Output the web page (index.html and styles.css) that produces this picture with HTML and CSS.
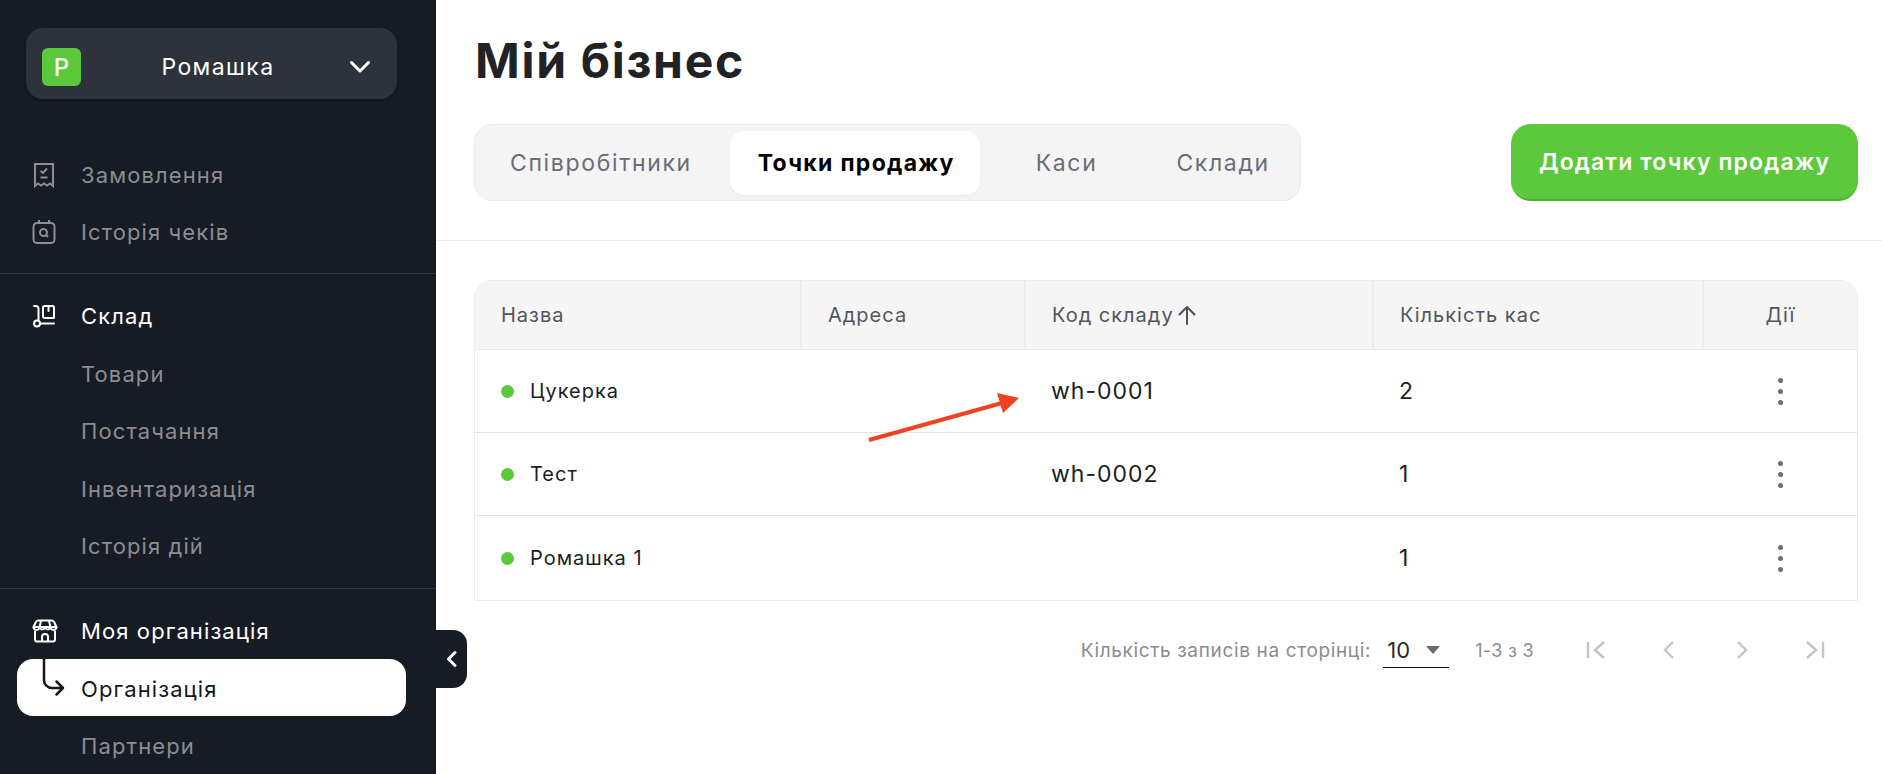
FILE: index.html
```html
<!DOCTYPE html>
<html lang="uk">
<head>
<meta charset="utf-8">
<title>Мій бізнес</title>
<link rel="stylesheet" href="styles.css">
</head>
<body>
<div class="app">
  <aside class="sidebar">
    <div class="org-select">
      <span class="org-logo">Р</span>
      <span class="org-name">Ромашка</span>
      <svg class="org-chevron" width="22" height="14" viewBox="0 0 22 14"><path d="M2.500 2.500 11 11l8.500-8.500" fill="none" stroke="#fff" stroke-width="3" stroke-linecap="round" stroke-linejoin="round"/></svg>
    </div>
    <nav class="nav nav-first">
      <a class="nav-item">
        <svg class="nav-icon" width="24" height="26" viewBox="0 0 24 26" fill="none" stroke="#8b8d92" stroke-width="2"><path d="M3 2h18v22l-3-2.500-3 2-3-2-3 2-3-2-3 2.500z"/><path d="M8.500 9l2.500 2 4-4.500M8.500 15.500h7"/></svg>
        <span>Замовлення</span>
      </a>
      <a class="nav-item">
        <svg class="nav-icon" width="24" height="26" viewBox="0 0 24 26" fill="none" stroke="#8b8d92" stroke-width="2"><rect x="1.500" y="4" width="21" height="20" rx="3.500"/><path d="M7 1v4M17 1v4"/><circle cx="11.500" cy="13.500" r="3.500"/><path d="M14 16l2 2"/></svg>
        <span>Історія чеків</span>
      </a>
    </nav>
    <nav class="nav">
      <a class="nav-item nav-head">
        <svg class="nav-icon" width="24" height="24" viewBox="0 0 24 24" fill="none" stroke="#fff" stroke-width="2" stroke-linecap="round" stroke-linejoin="round"><path d="M2 2h2a2.500 2.500 0 0 1 2.500 2.500V16"/><circle cx="5" cy="19.500" r="3"/><path d="M9 19.500h13"/><path d="M11 3.500a1.500 1.500 0 0 1 1.500-1.500h8A1.500 1.500 0 0 1 22 3.500V14H12.500A1.500 1.500 0 0 1 11 12.500z"/><path d="M16.500 2v5"/></svg>
        <span>Склад</span>
      </a>
      <a class="nav-item">Товари</a>
      <a class="nav-item">Постачання</a>
      <a class="nav-item">Інвентаризація</a>
      <a class="nav-item">Історія дій</a>
    </nav>
    <nav class="nav">
      <a class="nav-item nav-head">
        <svg class="nav-icon" width="26" height="24" viewBox="0 0 26 24" fill="none" stroke="#fff" stroke-width="2" stroke-linejoin="round"><path d="M6.500 1.500h13a3 3 0 0 1 2.600 1.500L24.500 8H1.500L3.900 3a3 3 0 0 1 2.600-1.500z"/><path d="M1.500 8a3 3 0 0 0 5.800 1 3.600 3.600 0 0 0 5.700 0 3.600 3.600 0 0 0 5.700 0 3 3 0 0 0 5.800-1"/><path d="M9 2l-1.500 6M17 2l1.500 6"/><path d="M3 12v8.500a2 2 0 0 0 2 2h16a2 2 0 0 0 2-2V12"/><path d="M10 22.500V18a3 3 0 0 1 6 0v4.500"/></svg>
        <span>Моя організація</span>
      </a>
      <a class="nav-item nav-active">
        <svg class="tree-arrow" width="26" height="40" viewBox="0 0 26 40" fill="none" stroke="#14171e" stroke-width="2.500" stroke-linecap="round" stroke-linejoin="round"><path d="M2 0v21a8 8 0 0 0 8 8h10.500"/><path d="M14.500 22.500l6.500 6.500-6.500 6.500"/></svg>
        <span>Організація</span>
      </a>
      <a class="nav-item">Партнери</a>
    </nav>
    <button class="collapse" type="button">
      <svg width="12" height="18" viewBox="0 0 12 18"><path d="M9 2.500 2.500 9 9 15.500" fill="none" stroke="#fff" stroke-width="3" stroke-linecap="round" stroke-linejoin="round"/></svg>
    </button>
  </aside>

  <main class="main">
    <header class="page-head">
      <h1 class="title">Мій бізнес</h1>
      <div class="toolbar">
        <div class="tabs">
          <span class="tab">Співробітники</span>
          <span class="tab tab-active">Точки продажу</span>
          <span class="tab tab-kasy">Каси</span>
          <span class="tab tab-sklady">Склади</span>
        </div>
        <button class="add-btn" type="button">Додати точку продажу</button>
      </div>
    </header>

    <section class="content">
      <div class="table-wrap">
        <table class="table">
          <colgroup>
            <col class="c-name"><col class="c-addr"><col class="c-code"><col class="c-count"><col>
          </colgroup>
          <thead>
            <tr>
              <th>Назва</th>
              <th>Адреса</th>
              <th><span class="sort">Код складу<svg width="22" height="22" viewBox="0 0 22 22" fill="none" stroke="#4f5159" stroke-width="2" stroke-linecap="round" stroke-linejoin="round"><path d="M11 20V3M3.500 10.500 11 3l7.500 7.500"/></svg></span></th>
              <th>Кількість кас</th>
              <th class="center">Дії</th>
            </tr>
          </thead>
          <tbody>
            <tr>
              <td class="name-cell"><span class="name"><i class="dot"></i>Цукерка</span></td>
              <td></td>
              <td class="big">wh-0001</td>
              <td class="big">2</td>
              <td class="center"><span class="kebab"><i></i><i></i><i></i></span></td>
            </tr>
            <tr>
              <td class="name-cell"><span class="name"><i class="dot"></i>Тест</span></td>
              <td></td>
              <td class="big">wh-0002</td>
              <td class="big">1</td>
              <td class="center"><span class="kebab"><i></i><i></i><i></i></span></td>
            </tr>
            <tr>
              <td class="name-cell"><span class="name"><i class="dot"></i>Ромашка 1</span></td>
              <td></td>
              <td class="big"></td>
              <td class="big">1</td>
              <td class="center"><span class="kebab"><i></i><i></i><i></i></span></td>
            </tr>
          </tbody>
        </table>
      </div>

      <div class="pager">
        <span class="pager-label">Кількість записів на сторінці:</span>
        <span class="pager-size"><span>10</span><svg width="14" height="8" viewBox="0 0 14 8"><path d="M0 0h14L7 8z" fill="#6a6a6a"/></svg></span>
        <span class="pager-range">1-3 з 3</span>
        <span class="pager-btns">
          <svg width="24" height="24" viewBox="0 0 24 24" fill="none" stroke="#c4c4c6" stroke-width="2.400"><path d="M4 4v16M20 4l-9 8 9 8"/></svg>
          <svg width="24" height="24" viewBox="0 0 24 24" fill="none" stroke="#c4c4c6" stroke-width="2.400"><path d="M16 4l-8 8 8 8"/></svg>
          <svg width="24" height="24" viewBox="0 0 24 24" fill="none" stroke="#c4c4c6" stroke-width="2.400"><path d="M8 4l8 8-8 8"/></svg>
          <svg width="24" height="24" viewBox="0 0 24 24" fill="none" stroke="#c4c4c6" stroke-width="2.400"><path d="M20 4v16M4 4l9 8-9 8"/></svg>
        </span>
      </div>
    </section>
  </main>

  <svg class="annot" width="170" height="60" viewBox="0 0 170 60"><path d="M1 52 134 15" stroke="#ee4223" stroke-width="4" fill="none"/><path d="M151 10 129 5l6 20z" fill="#ee4223"/></svg>
</div>
</body>
</html>
```

FILE: styles.css
```css
* { box-sizing: border-box; }
html, body { margin: 0; height: 100%; }
body {
  font-family: Inter, "Noto Sans", "Liberation Sans", sans-serif;
  color: #1c1e24;
  background: #fff;
  overflow: hidden;
}
.app { display: flex; height: 774px; position: relative; overflow: hidden; }

/* Sidebar */
.sidebar {
  position: relative;
  width: 436px;
  flex: none;
  background: #171b24;
  padding-top: 28px;
}
.org-select {
  display: flex;
  align-items: center;
  height: 71px;
  margin: 0 39px 0 26px;
  padding: 7px 26px 0 16px;
  border-radius: 17px;
  background: #2e323b;
  box-shadow: 0 2px 3px rgba(0,0,0,.25);
  color: #fff;
}
.org-logo {
  width: 39px;
  height: 38px;
  flex: none;
  border-radius: 6px;
  background: #5cc93c;
  color: #fff;
  display: flex;
  align-items: center;
  justify-content: center;
  font-size: 24px;
  font-weight: 500;
}
.org-name {
  flex: 1;
  padding-left: 6px;
  text-align: center;
  font-size: 23px;
  letter-spacing: 1.4px;
}
.org-chevron { flex: none; }
.nav { padding: 13px 0; border-bottom: 1px solid #2f333b; }
.nav:last-of-type { border-bottom: 0; }
.nav-first { padding: 47px 0 12px; }
.nav-item {
  position: relative;
  display: flex;
  align-items: center;
  height: 57.6px;
  padding-left: 81px;
  font-size: 22px;
  letter-spacing: 1.1px;
  color: #8b8d92;
}
.nav-icon { position: absolute; left: 32px; top: 50%; transform: translateY(-50%); }
.nav-head { color: #fff; }
.nav-active {
  margin: -1px 30px 1px 17px;
  padding: 2px 0 0 64px;
  border-radius: 16px;
  background: #fff;
  color: #14171e;
}
.tree-arrow { position: absolute; left: 25px; top: 0; }
.collapse {
  position: absolute;
  left: 436px;
  top: 630px;
  width: 31px;
  height: 58px;
  padding: 0;
  border: 0;
  border-radius: 0 14px 14px 0;
  background: #171b24;
  display: flex;
  align-items: center;
  justify-content: center;
}

/* Main */
.main { flex: 1; min-width: 0; }
.page-head {
  height: 241px;
  padding: 27px 24px 0 38px;
  border-bottom: 1px solid #ececee;
}
.title {
  margin: 0 0 0 1px;
  height: 68px;
  line-height: 68px;
  font-size: 48px;
  font-weight: 700;
  color: #212226;
  letter-spacing: 1.7px;
}
.toolbar {
  display: flex;
  justify-content: space-between;
  margin-top: 29px;
}
.tabs {
  display: flex;
  align-items: center;
  gap: 10px;
  height: 77px;
  padding: 0 7px;
  border: 1px solid #ececee;
  border-radius: 18px;
  background: #f4f4f5;
  width: 827px;
}
.tab {
  flex: none;
  padding: 0 28px;
  height: 64px;
  display: flex;
  align-items: center;
  white-space: nowrap;
  font-size: 23px;
  letter-spacing: 1.65px;
  color: #6a6d76;
}
.tab-active {
  padding: 0 25px 0 28px;
  background: #fff;
  border-radius: 14px;
  color: #000;
  font-weight: 700;
  letter-spacing: 1.3px;
  box-shadow: 0 1px 2px rgba(0,0,0,.05);
}
.tab-kasy { margin-left: 18px; }
.tab-sklady { margin-left: 13px; }
.add-btn {
  width: 347px;
  height: 77px;
  border: 0;
  border-bottom: 2px solid #4fb033;
  border-radius: 20px;
  background: #5cc93c;
  color: #fff;
  font: 600 23px Inter, "Noto Sans", sans-serif;
  letter-spacing: 1.15px;
}

/* Table */
.content { padding: 39px 24px 0 38px; }
.table-wrap {
  border: 1px solid #ececee;
  border-radius: 18px 18px 0 0;
  overflow: hidden;
}
.table { width: 100%; border-collapse: separate; border-spacing: 0; table-layout: fixed; }
.c-name { width: 327px; }
.c-addr { width: 224px; }
.c-code { width: 348px; }
.c-count { width: 330px; }
th {
  height: 69px;
  padding: 0 0 0 26px;
  background: #f5f5f6;
  border-bottom: 1px solid #e8e8ea;
  border-right: 2px solid #ececee;
  text-align: left;
  font-size: 20px;
  font-weight: 400;
  letter-spacing: 1px;
  color: #53555e;
}
th:last-child { border-right: 0; }
th.center { padding: 0; text-align: center; }
td {
  height: 83px;
  padding: 0 0 0 25px;
  border-bottom: 1px solid #e4e4e6;
  font-size: 20px;
  letter-spacing: 1px;
  color: #1c1e24;
}
tr:last-child td { height: 84px; border-bottom: 0; }
td.name-cell { padding-left: 26px; }
td.center { padding: 0; text-align: center; }
td.big { font-size: 23px; letter-spacing: 1px; }
.sort { display: inline-flex; align-items: center; gap: 2px; }
.name { display: flex; align-items: center; gap: 16px; }
.dot { width: 13px; height: 13px; border-radius: 50%; background: #5cc93c; }
.kebab { display: inline-flex; flex-direction: column; gap: 6px; vertical-align: middle; }
.kebab i { width: 5px; height: 5px; border-radius: 50%; background: #6b6e76; }

/* Pager */
.pager {
  display: flex;
  align-items: center;
  justify-content: flex-end;
  margin-top: 24px;
  height: 50px;
  font-size: 18px;
  color: #8a8b90;
}
.pager-label { font-size: 19px; letter-spacing: .65px; }
.pager-range { letter-spacing: .3px; }
.pager-size {
  display: flex;
  align-items: center;
  justify-content: space-between;
  width: 66px;
  height: 36px;
  margin: 0 26px 0 12px;
  padding: 0 9px 0 4px;
  border-bottom: 1px solid #111;
  font-size: 22px;
  color: #2a2a2a;
}
.pager-btns { display: flex; gap: 49px; margin: 0 31px 0 50px; }

/* Annotation drawn over the page */
.annot { position: absolute; left: 868px; top: 388px; }
```
